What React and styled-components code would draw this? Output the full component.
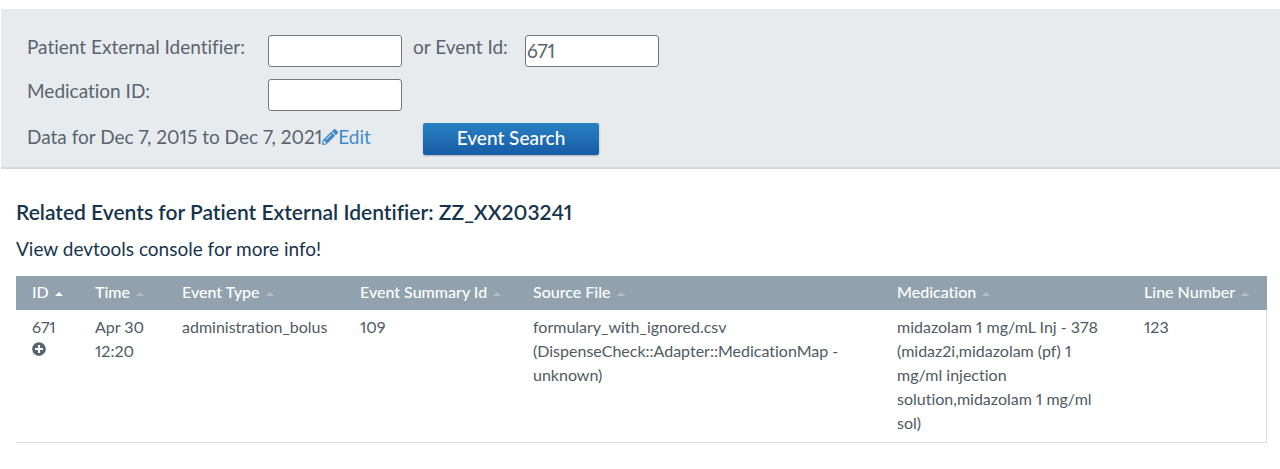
import React from "react";
import styled, { createGlobalStyle } from "styled-components";
import { FaPencilAlt, FaPlusCircle } from "react-icons/fa";

const GlobalStyle = createGlobalStyle`
  *, *::before, *::after { box-sizing: border-box; }
  body {
    margin: 0;
    background: #fff;
    color: #59646e;
    font-family: Lato, "Liberation Sans", sans-serif;
    font-size: 19px;
    font-variant-ligatures: none;
    font-variant-numeric: proportional-nums;
    line-height: 24px;
  }
`;

const SearchPanel = styled.form`
  display: flex;
  flex-direction: column;
  gap: 12px;
  margin: 9px 0 0 1px;
  padding: 26px 26px 12px;
  background: #e8ebee;
  border-bottom: 2px solid #d6d9dc;
`;

const FormRow = styled.div`
  display: flex;
  align-items: flex-start;
`;

const Label = styled.label`
  flex: none;
  width: ${(p) => p.$width}px;
  padding-left: ${(p) => p.$indent || 0}px;
`;

const TextInput = styled.input`
  width: 134px;
  height: 32px;
  padding: 0 1px 2px;
  border: 1px solid #767676;
  border-radius: 3px;
  background: #fff;
  color: inherit;
  font: inherit;
`;

const DateRange = styled.div`
  display: flex;
  align-items: center;
  flex: none;
  width: 396px;
  padding-top: 2px;
`;

const EditLink = styled.a`
  display: inline-flex;
  align-items: center;
  color: #428bca;
  text-decoration: none;
  svg { width: 16px; height: 16px; }
`;

const SearchButton = styled.button`
  width: 176px;
  height: 32px;
  padding: 0 0 2px;
  border: 0;
  border-radius: 2px;
  background: linear-gradient(#2980c3, #175ca6);
  box-shadow: 0 1px 2px rgba(0, 0, 0, 0.25);
  color: #fff;
  font: inherit;
  font-weight: 500;
`;

const Results = styled.main`
  padding: 31px 13px 26px 16px;
  color: #17344d;
`;

const Title = styled.h1`
  margin: 0 0 13px;
  font-size: 21px;
  font-weight: 600;
  line-height: 24px;
`;

const Hint = styled.p`
  margin: 0 0 15px;
`;

const Table = styled.table`
  width: 100%;
  table-layout: fixed;
  border-collapse: separate;
  border-spacing: 0;
  color: #4f5a63;
  font-size: 16px;
`;

const Column = styled.col`
  width: ${(p) => (p.$width ? `${p.$width}px` : "auto")};
`;

const HeadCell = styled.th`
  padding: 4px 0 6px 16px;
  background: #91a2ae;
  color: #fff;
  font-weight: 500;
  text-align: left;
  white-space: nowrap;
`;

const SortArrow = styled.span`
  display: inline-block;
  margin-left: 6px;
  border: 4px solid transparent;
  border-top: 0;
  border-bottom-color: ${(p) => (p.$active ? "#fff" : "#abbfcc")};
  vertical-align: 2px;
`;

const Cell = styled.td`
  padding: 5px 16px 7px;
  border-bottom: 1px solid #dcdfe1;
  vertical-align: top;
  white-space: ${(p) => (p.$nowrap ? "nowrap" : "normal")};
  &:last-child { border-right: 1px solid #dcdfe1; }
`;

const ExpandButton = styled.button`
  display: flex;
  padding: 3px 0;
  border: 0;
  background: none;
  color: #59646e;
  svg { width: 14px; height: 14px; }
`;

const columns = [
  { name: "ID", width: 63, sorted: true },
  { name: "Time", width: 87 },
  { name: "Event Type", width: 178 },
  { name: "Event Summary Id", width: 173 },
  { name: "Source File" },
  { name: "Medication", width: 247 },
  { name: "Line Number", width: 139 },
];

export default function App() {
  return (
    <>
      <GlobalStyle />
      <SearchPanel onSubmit={(e) => e.preventDefault()}>
        <FormRow>
          <Label htmlFor="patient" $width={241}>Patient External Identifier:</Label>
          <TextInput id="patient" type="text" />
          <Label htmlFor="event" $width={123} $indent={11}>or Event Id:</Label>
          <TextInput id="event" type="text" defaultValue="671" />
        </FormRow>
        <FormRow>
          <Label htmlFor="medication" $width={241}>Medication ID:</Label>
          <TextInput id="medication" type="text" />
        </FormRow>
        <FormRow>
          <DateRange>
            <span>Data for Dec 7, 2015 to Dec 7, 2021</span>
            <EditLink href="#edit"><FaPencilAlt aria-hidden="true" />Edit</EditLink>
          </DateRange>
          <SearchButton type="submit">Event Search</SearchButton>
        </FormRow>
      </SearchPanel>
      <Results>
        <Title>Related Events for Patient External Identifier: ZZ_XX203241</Title>
        <Hint>View devtools console for more info!</Hint>
        <Table>
          <colgroup>
            {columns.map((c) => <Column key={c.name} $width={c.width} />)}
          </colgroup>
          <thead>
            <tr>
              {columns.map((c) => (
                <HeadCell key={c.name} scope="col" aria-sort={c.sorted ? "ascending" : "none"}>
                  {c.name}<SortArrow $active={c.sorted} />
                </HeadCell>
              ))}
            </tr>
          </thead>
          <tbody>
            <tr>
              <Cell $nowrap>
                671
                <ExpandButton type="button" aria-label="Show details"><FaPlusCircle /></ExpandButton>
              </Cell>
              <Cell $nowrap>Apr 30<br />12:20</Cell>
              <Cell $nowrap>administration_bolus</Cell>
              <Cell>109</Cell>
              <Cell>formulary_with_ignored.csv (DispenseCheck::Adapter::MedicationMap - unknown)</Cell>
              <Cell>midazolam 1 mg/mL Inj - 378 (midaz2i,midazolam (pf) 1 mg/ml injection solution,midazolam 1 mg/ml sol)</Cell>
              <Cell>123</Cell>
            </tr>
          </tbody>
        </Table>
      </Results>
    </>
  );
}
